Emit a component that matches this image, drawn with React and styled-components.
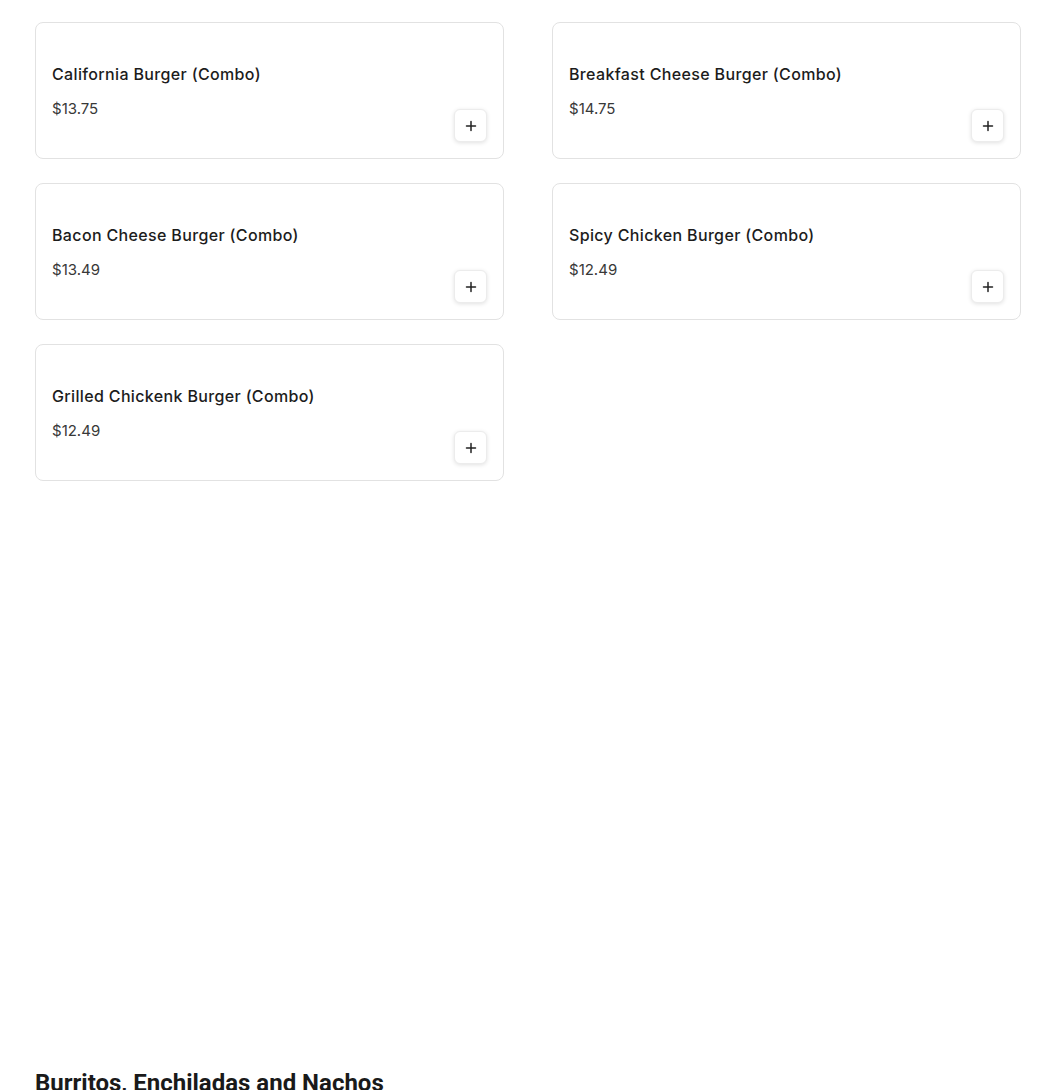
import React from 'react';
import styled, { createGlobalStyle } from 'styled-components';

const GlobalStyle = createGlobalStyle`
  html, body {
    margin: 0;
    padding: 0;
    background: #fff;
    overflow: hidden;
  }
  body {
    font-family: Inter, 'Open Sans', 'Liberation Sans', sans-serif;
    color: #1a1a1a;
  }
`;

// the viewport is scrolled a little, so the previous row just peeks in at the top
const Page = styled.div`
  padding: 0 29px 0 35px;
  margin-top: -139px;
`;

const Grid = styled.div`
  display: grid;
  grid-template-columns: 469px 469px;
  column-gap: 48px;
  row-gap: 24px;
`;

const Card = styled.div`
  display: flex;
  justify-content: space-between;
  height: 137px;
  box-sizing: border-box;
  padding: 16px;
  border: 1px solid #e2e2e2;
  border-radius: 8px;
  background: #fff;
`;

const Info = styled.div`
  align-self: center;
  display: flex;
  flex-direction: column;
  gap: 11px;
  padding-top: 2px;
`;

const Title = styled.div`
  font-size: 16px;
  font-weight: 500;
  line-height: 24px;
  color: #1c1c1c;
  letter-spacing: 0.35px;
`;

const Price = styled.div`
  font-size: 15px;
  line-height: 24px;
  color: #383838;
`;

const AddButton = styled.button`
  align-self: flex-end;
  width: 33px;
  height: 33px;
  padding: 0;
  display: flex;
  align-items: center;
  justify-content: center;
  border: 1px solid #ececec;
  border-radius: 6px;
  background: #fff;
  box-shadow: 0 1px 4px rgba(0, 0, 0, 0.12);
  cursor: pointer;
`;

const Heading = styled.h2`
  margin: 586px 0 0;
  font-family: Roboto, 'Liberation Sans', sans-serif;
  font-size: 24px;
  font-weight: 700;
  line-height: 32px;
  color: #1a1a1a;
`;

const Plus = () => (
  <svg width="12" height="12" viewBox="0 0 12 12" fill="none">
    <path d="M6 1.5v9M1.5 6h9" stroke="#222" strokeWidth="1.5" strokeLinecap="round" />
  </svg>
);

const items = [
  { id: 'p1', title: 'Classic Burger (Combo)', price: 12.49 },
  { id: 'p2', title: 'Double Cheese Burger (Combo)', price: 14.49 },
  { id: 1, title: 'California Burger (Combo)', price: 13.75 },
  { id: 2, title: 'Breakfast Cheese Burger (Combo)', price: 14.75 },
  { id: 3, title: 'Bacon Cheese Burger (Combo)', price: 13.49 },
  { id: 4, title: 'Spicy Chicken Burger (Combo)', price: 12.49 },
  { id: 5, title: 'Grilled Chickenk Burger (Combo)', price: 12.49 },
];

export default function App() {
  return (
    <Page>
      <GlobalStyle />
      <Grid>
        {items.map(el => (
          <Card key={el.id}>
            <Info>
              <Title>{el.title}</Title>
              <Price>${el.price.toFixed(2)}</Price>
            </Info>
            <AddButton aria-label="Add"><Plus /></AddButton>
          </Card>
        ))}
      </Grid>
      <Heading>Burritos, Enchiladas and Nachos</Heading>
    </Page>
  );
}
